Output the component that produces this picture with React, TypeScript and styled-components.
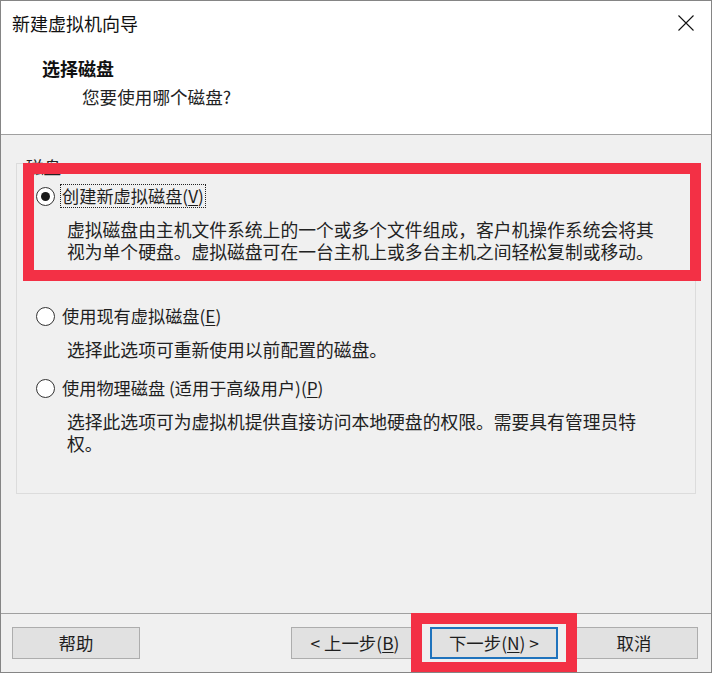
import React from "react";
import styled, { createGlobalStyle } from "styled-components";

const GlobalStyle = createGlobalStyle`
  html, body {
    margin: 0;
    padding: 0;
    background: #ffffff;
  }
  body {
    font-family: "Noto Sans CJK SC", "Noto Sans", sans-serif;
    color: #1e1e1e;
  }
  * { box-sizing: border-box; }
`;

const RED = "#f33045";

const Window = styled.div`
  position: relative;
  width: 712px;
  height: 673px;
  border: 1px solid #858585;
  display: flex;
  flex-direction: column;
  background: #f0f0f0;
  overflow: hidden;
`;

const TitleBar = styled.div`
  height: 44px;
  flex: none;
  display: flex;
  align-items: center;
  justify-content: space-between;
  padding: 0 17px 0 11px;
  background: #ffffff;
`;

const Title = styled.div`
  font-size: 18px;
  line-height: 22px;
  color: #111;
`;

const CloseButton = styled.button`
  width: 16px;
  height: 16px;
  padding: 0;
  border: none;
  background: transparent;
  display: flex;
  align-items: center;
  justify-content: center;
`;

const Header = styled.div`
  height: 90px;
  flex: none;
  background: #ffffff;
  border-bottom: 1px solid #a0a0a0;
  padding: 12px 0 0 41px;
`;

const Heading = styled.div`
  font-size: 18px;
  line-height: 22px;
  font-weight: 700;
  color: #111;
`;

const Subtitle = styled.div`
  margin: 7px 0 0 40px;
  font-size: 17.6px;
  line-height: 22px;
  color: #222;
`;

const Body = styled.div`
  flex: 1;
  padding: 28px 15px 0;
`;

const GroupBox = styled.div`
  position: relative;
  height: 331px;
  border: 1px solid #dcdcdc;
  padding: 20px 0 0 19px;
`;

const Legend = styled.span`
  position: absolute;
  top: -8px;
  left: 8px;
  padding: 0 1px;
  background: #f0f0f0;
  font-size: 17.6px;
  line-height: 22px;
  color: #222;
`;

const Option = styled.div<{ $spaceBefore: number }>`
  margin-top: ${(p) => p.$spaceBefore}px;
`;

const OptionRow = styled.label`
  display: flex;
  align-items: center;
  height: 24px;
  gap: 5px;
`;

const Radio = styled.span<{ $checked?: boolean }>`
  position: relative;
  width: 19px;
  height: 19px;
  flex: none;
  border-radius: 50%;
  border: 1px solid #333333;
  background: #ffffff;
  &::after {
    content: "";
    display: ${(p) => (p.$checked ? "block" : "none")};
    position: absolute;
    left: 4px;
    top: 4px;
    width: 9px;
    height: 9px;
    border-radius: 50%;
    background: #1a1a1a;
  }
`;

const OptionLabel = styled.span<{ $focused?: boolean }>`
  font-size: 17.2px;
  line-height: 22px;
  padding: 0 1px;
  border: 1px dotted ${(p) => (p.$focused ? "#222" : "transparent")};
  color: #1e1e1e;
  white-space: nowrap;
`;

const Key = styled.span`
  text-decoration: underline;
  text-underline-offset: 2px;
`;

const Description = styled.div`
  margin-top: 10px;
  padding-left: 31px;
  display: flex;
  flex-direction: column;
`;

const DescLine = styled.div`
  height: 22px;
  font-size: 17.8px;
  line-height: 22px;
  color: #222;
  white-space: nowrap;
`;

const Footer = styled.div`
  height: 59px;
  flex: none;
  border-top: 1px solid #a0a0a0;
  display: flex;
  align-items: center;
  padding: 0 13px 0 11px;
`;

const Spacer = styled.div`
  flex: 1;
`;

const Button = styled.button<{ $primary?: boolean; $gap?: number }>`
  width: 128px;
  height: 32px;
  margin-left: ${(p) => p.$gap ?? 0}px;
  background: #e1e1e1;
  border: ${(p) => (p.$primary ? "2px solid #1f73bd" : "1px solid #adadad")};
  font-family: "Noto Sans CJK SC", "Noto Sans", sans-serif;
  font-size: 17.4px;
  line-height: 22px;
  color: #1e1e1e;
  padding: 0;
  display: flex;
  align-items: center;
  justify-content: center;
`;

const Highlight = styled.div<{ $left: number; $top: number; $w: number; $h: number }>`
  position: absolute;
  left: ${(p) => p.$left}px;
  top: ${(p) => p.$top}px;
  width: ${(p) => p.$w}px;
  height: ${(p) => p.$h}px;
  border: 11px solid ${RED};
  pointer-events: none;
`;

const CloseIcon = () => (
  <svg width="16" height="16" viewBox="0 0 16 16">
    <path d="M0.5 0.5 L15.5 15.5 M15.5 0.5 L0.5 15.5" stroke="#111" strokeWidth="1.1" fill="none" />
  </svg>
);

export default function App() {
  return (
    <>
      <GlobalStyle />
      <Window>
        <TitleBar>
          <Title>新建虚拟机向导</Title>
          <CloseButton aria-label="关闭">
            <CloseIcon />
          </CloseButton>
        </TitleBar>
        <Header>
          <Heading>选择磁盘</Heading>
          <Subtitle>您要使用哪个磁盘?</Subtitle>
        </Header>
        <Body>
          <GroupBox>
            <Legend>磁盘</Legend>
            <Option $spaceBefore={0}>
              <OptionRow>
                <Radio $checked />
                <OptionLabel $focused>
                  创建新虚拟磁盘(<Key>V</Key>)
                </OptionLabel>
              </OptionRow>
              <Description>
                <DescLine>虚拟磁盘由主机文件系统上的一个或多个文件组成，客户机操作系统会将其</DescLine>
                <DescLine>视为单个硬盘。虚拟磁盘可在一台主机上或多台主机之间轻松复制或移动。</DescLine>
              </Description>
            </Option>
            <Option $spaceBefore={42}>
              <OptionRow>
                <Radio />
                <OptionLabel>
                  使用现有虚拟磁盘(<Key>E</Key>)
                </OptionLabel>
              </OptionRow>
              <Description>
                <DescLine>选择此选项可重新使用以前配置的磁盘。</DescLine>
              </Description>
            </Option>
            <Option $spaceBefore={16}>
              <OptionRow>
                <Radio />
                <OptionLabel>
                  使用物理磁盘 (适用于高级用户)(<Key>P</Key>)
                </OptionLabel>
              </OptionRow>
              <Description>
                <DescLine>选择此选项可为虚拟机提供直接访问本地硬盘的权限。需要具有管理员特</DescLine>
                <DescLine>权。</DescLine>
              </Description>
            </Option>
          </GroupBox>
        </Body>
        <Footer>
          <Button>帮助</Button>
          <Spacer />
          <Button>
            &lt; 上一步(<Key>B</Key>)
          </Button>
          <Button $primary $gap={11}>
            下一步(<Key>N</Key>) &gt;
          </Button>
          <Button $gap={12}>取消</Button>
        </Footer>
        <Highlight $left={22} $top={162} $w={678} $h={118} />
        <Highlight $left={410} $top={612} $w={166} $h={60} />
      </Window>
    </>
  );
}
